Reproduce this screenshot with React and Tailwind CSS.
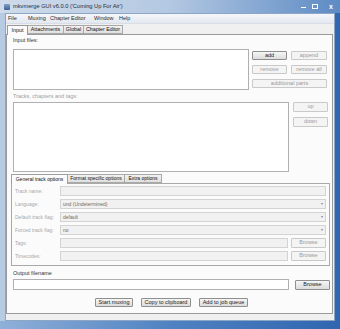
import React from "react";

const F = { fontFamily: '"Liberation Sans", Arial, sans-serif' };

function Btn({ children, w, enabled, className = "" }) {
  return (
    <div
      className={`flex items-center justify-center whitespace-nowrap rounded-[1px] border text-[5.5px] leading-none ${
        enabled
          ? "border-[#8e8f8f] bg-gradient-to-b from-[#f6f6f6] to-[#dcdcdc] text-[#222]"
          : "border-[#c9c9c9] bg-[#f4f4f4] text-[#9a9a9a]"
      } ${className}`}
      style={{ width: w }}
    >
      {children}
    </div>
  );
}

function Row({ label, value, combo, browse }) {
  return (
    <div className="flex h-[10px] items-center">
      <div className="w-[45px] whitespace-nowrap text-[5px] leading-none text-[#a8a8a8]">{label}</div>
      <div
        className={`flex h-[10px] items-center whitespace-nowrap border border-[#d3d3d3] bg-[#f1f1f1] pl-[2px] text-[5px] leading-none text-[#6a6a6a] ${
          browse ? "w-[228px]" : "w-[266px]"
        }`}
      >
        <span className="flex-1">{value}</span>
        {combo && <span className="mr-[2px] text-[4px] text-[#888]">▾</span>}
      </div>
      {browse && <Btn w={35} className="ml-[3px] h-[10px]">Browse</Btn>}
    </div>
  );
}

const tabOff =
  "flex h-[9px] items-center justify-center whitespace-nowrap border border-l-0 border-[#a9a9a9] bg-gradient-to-b from-[#f2f2f2] to-[#e0e0e0]";

export default function App() {
  return (
    <div
      className="flex h-[329px] w-[340px] flex-col bg-gradient-to-r from-[#b7cbe3] via-[#9dbbe0] to-[#2f66b0]"
      style={F}
    >
      {/* title bar */}
      <div className="flex h-[13px] items-center bg-gradient-to-r from-[#cfdbea] via-[#b3c8e2] to-[#5d8bc4]">
        <div className="ml-[4px] h-[6px] w-[6px] rounded-[1px] bg-gradient-to-b from-[#7fa0c8] to-[#3f5f95]" />
        <div className="ml-[3px] whitespace-nowrap text-[5.7px] leading-none text-[#1f2a3a]">
          mkvmerge GUI v6.0.0 ('Coming Up For Air')
        </div>
        <div className="flex-1" />
        <div className="mr-[7px] flex items-center gap-[6px] text-[6px] leading-none text-white">
          <span className="mt-[2px] h-[1px] w-[5px] bg-white" />
          <span className="h-[5px] w-[6px] border border-white" />
          <span className="ml-[5px] text-[7px] font-bold">x</span>
        </div>
      </div>

      {/* client area */}
      <div className="mx-[5px] flex h-[308px] flex-col border border-[#8ea6c6] bg-[#f0f0f0]">
        {/* menu */}
        <div className="flex h-[10px] items-center whitespace-nowrap border-b border-[#d8dde6] bg-gradient-to-b from-[#f4f6fa] to-[#e3e8f0] pl-[2px] text-[5.5px] leading-none text-[#2a2a2a]">
          <span className="w-[20px]">File</span>
          <span className="w-[22px]">Muxing</span>
          <span className="w-[44px]">Chapter Editor</span>
          <span className="w-[25px]">Window</span>
          <span>Help</span>
        </div>

        {/* tab headers */}
        <div className="mt-[1px] flex h-[9px] items-end pl-[1px] text-[5.3px] leading-none text-[#111]">
          <div className="z-10 -mb-[1px] flex h-[10px] w-[21px] items-center justify-center border border-b-0 border-[#9a9a9a] bg-[#fbfbfb]">
            Input
          </div>
          <div className={`${tabOff} w-[36px]`}>Attachments</div>
          <div className={`${tabOff} w-[20px]`}>Global</div>
          <div className={`${tabOff} w-[39px]`}>Chapter Editor</div>
        </div>

        {/* main tab panel */}
        <div className="mr-[1px] flex h-[280px] flex-col border border-[#9a9a9a] bg-[#fbfbfb] pl-[6px]">
          <div className="mt-[3px] h-[6px] whitespace-nowrap text-[5.5px] leading-none text-[#333]">Input files:</div>
          <div className="mt-[5px] flex">
            <div className="h-[41px] w-[236px] border border-[#b0b0b0] bg-white" />
            <div className="ml-[3px] mt-[2px] flex flex-col gap-[5px]">
              <div className="flex gap-[4px]">
                <Btn w={35} enabled className="h-[9px]">add</Btn>
                <Btn w={36} className="h-[9px]">append</Btn>
              </div>
              <div className="flex gap-[4px]">
                <Btn w={35} className="h-[9px]">remove</Btn>
                <Btn w={36} className="h-[9px]">remove all</Btn>
              </div>
              <Btn w={75} className="h-[9px]">additional parts</Btn>
            </div>
          </div>

          <div className="mt-[4px] h-[6px] whitespace-nowrap text-[5.5px] leading-none text-[#a0a0a0]">
            Tracks, chapters and tags:
          </div>
          <div className="mt-[2px] flex">
            <div className="h-[70px] w-[276px] border border-[#b0b0b0] bg-white" />
            <div className="ml-[4px] flex flex-col gap-[5px]">
              <Btn w={35} className="h-[10px]">up</Btn>
              <Btn w={35} className="h-[10px]">down</Btn>
            </div>
          </div>

          {/* sub tabs */}
          <div className="-ml-[2px] mt-[1px] flex h-[10px] items-end text-[5px] leading-none text-[#111]">
            <div className="z-10 -mb-[1px] flex h-[10px] w-[57px] items-center justify-center whitespace-nowrap border border-b-0 border-[#a0a0a0] bg-[#fbfbfb]">
              General track options
            </div>
            <div className={`${tabOff} w-[57px]`}>Format specific options</div>
            <div className={`${tabOff} w-[37px]`}>Extra options</div>
          </div>
          <div className="-ml-[2px] flex h-[83px] w-[319px] flex-col gap-[3px] border border-[#a9a9a9] bg-[#fbfbfb] pl-[3px] pt-[2px]">
            <Row label="Track name:" value="" />
            <Row label="Language:" value="und (Undetermined)" combo />
            <Row label="Default track flag:" value="default" combo />
            <Row label="Forced track flag:" value="no" combo />
            <Row label="Tags:" value="" browse />
            <Row label="Timecodes:" value="" browse />
          </div>

          <div className="mt-[5px] h-[6px] whitespace-nowrap text-[5.5px] leading-none text-[#333]">Output filename</div>
          <div className="mt-[2px] flex items-center">
            <div className="h-[11px] w-[276px] border border-[#b0b0b0] bg-white" />
            <Btn w={35} enabled className="ml-[6px] h-[10px]">Browse</Btn>
          </div>

          <div className="mt-[8px] flex justify-center gap-[8px] pr-[2px]">
            <Btn w={38} enabled className="h-[9px]">Start muxing</Btn>
            <Btn w={50} enabled className="h-[9px]">Copy to clipboard</Btn>
            <Btn w={49} enabled className="h-[9px]">Add to job queue</Btn>
          </div>
        </div>
        <div className="flex-1" />
      </div>
      <div className="flex-1 bg-gradient-to-r from-[#8fb0d8] via-[#4f82c2] to-[#2f66b0]" />
    </div>
  );
}
